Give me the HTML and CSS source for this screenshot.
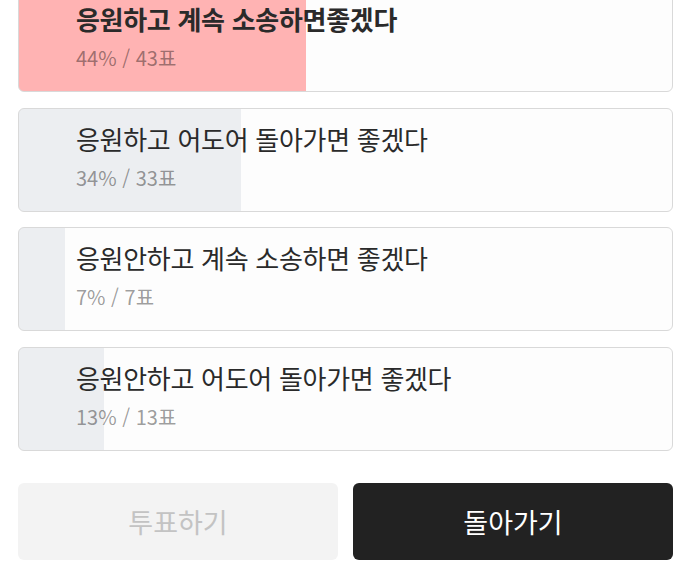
FILE: index.html
```html
<!DOCTYPE html>
<html lang="ko">
<head>
<meta charset="utf-8">
<title>투표 결과</title>
<link rel="stylesheet" href="styles.css">
</head>
<body>
<main class="poll">
  <ul class="options">
    <li class="option option--picked" style="--p:44%">
      <p class="option__title">응원하고 계속 소송하면좋겠다</p>
      <p class="option__meta">44% / 43표</p>
    </li>
    <li class="option" style="--p:34%">
      <p class="option__title">응원하고 어도어 돌아가면 좋겠다</p>
      <p class="option__meta">34% / 33표</p>
    </li>
    <li class="option" style="--p:7%">
      <p class="option__title">응원안하고 계속 소송하면 좋겠다</p>
      <p class="option__meta">7% / 7표</p>
    </li>
    <li class="option" style="--p:13%">
      <p class="option__title">응원안하고 어도어 돌아가면 좋겠다</p>
      <p class="option__meta">13% / 13표</p>
    </li>
  </ul>
  <div class="actions">
    <button class="btn btn--disabled" type="button">투표하기</button>
    <button class="btn btn--dark" type="button">돌아가기</button>
  </div>
</main>
</body>
</html>
```
FILE: styles.css
```css
* { box-sizing: border-box; }
html, body {
  margin: 0;
  padding: 0;
  background: #ffffff;
  font-family: "Noto Sans CJK KR", "Noto Sans", sans-serif;
}
.poll {
  padding: 0 12px 0 18px;
}
.options {
  list-style: none;
  margin: -12px 0 0;
  padding: 0;
  display: flex;
  flex-direction: column;
  gap: 15.5px;
}
.option {
  --fill: #eceef1;
  height: 104px;
  border: 1.5px solid #d9d9d9;
  border-radius: 6px;
  background: linear-gradient(to right, var(--fill) var(--p), #fdfdfd var(--p));
  padding: 13px 0 0 57px;
  overflow: hidden;
}
.option--picked {
  --fill: #ffb3b3;
}
.option__title {
  margin: 0;
  font-size: 26px;
  line-height: 34px;
  letter-spacing: -0.3px;
  color: #2a2a2a;
}
.option--picked .option__title {
  font-weight: 700;
}
.option__meta {
  margin: 9px 0 0;
  font-size: 20px;
  line-height: 26px;
  letter-spacing: 0;
  color: rgba(0, 0, 0, 0.4);
}
.actions {
  margin-top: 32px;
  display: flex;
  gap: 15px;
}
.btn {
  flex: 1;
  height: 77px;
  border: none;
  border-radius: 6px;
  font-family: inherit;
  font-size: 27px;
  letter-spacing: 0;
}
.btn--disabled {
  background: #f3f3f3;
  color: #c3c3c3;
}
.btn--dark {
  background: #222222;
  color: #ffffff;
}
```
